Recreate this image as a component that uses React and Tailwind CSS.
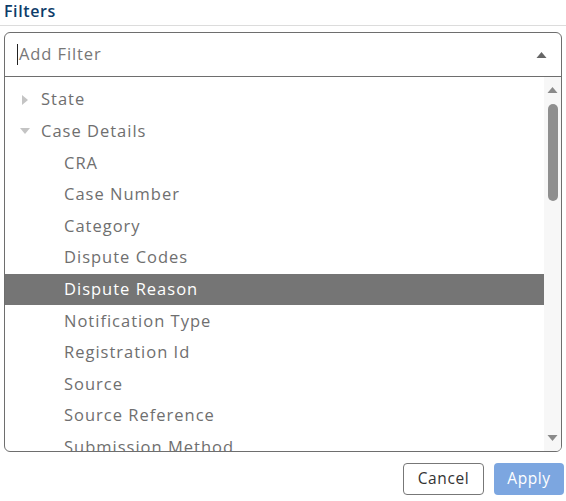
import { useState } from 'react'

const rows = [
  { label: 'State', level: 0, toggle: 'closed' },
  { label: 'Case Details', level: 0, toggle: 'open' },
  { label: 'CRA', level: 1 },
  { label: 'Case Number', level: 1 },
  { label: 'Category', level: 1 },
  { label: 'Dispute Codes', level: 1 },
  { label: 'Dispute Reason', level: 1 },
  { label: 'Notification Type', level: 1 },
  { label: 'Registration Id', level: 1 },
  { label: 'Source', level: 1 },
  { label: 'Source Reference', level: 1 },
  { label: 'Submission Method', level: 1 },
]

function Caret({ dir, className }) {
  // small solid triangles used by the tree and the select
  const d = {
    up: 'M0 8 L5 2 L10 8 Z',
    down: 'M0 2 L10 2 L5 8 Z',
    right: 'M2 0 L8 5 L2 10 Z',
  }[dir]
  return (
    <svg viewBox="0 0 10 10" className={className} fill="currentColor">
      <path d={d} />
    </svg>
  )
}

function TreeRow({ row, active }) {
  return (
    <div
      className={`flex h-[31.6px] shrink-0 items-center ${
        active ? 'bg-[#757575] text-white' : 'text-[#6f6f6f]'
      } ${row.level === 0 ? 'pl-[15px]' : 'pl-[59px]'}`}
    >
      {row.toggle && (
        <span className="mr-[11px] flex w-[10px] justify-center text-[#c4c4c4]">
          <Caret dir={row.toggle === 'open' ? 'down' : 'right'} className="h-[10px] w-[10px]" />
        </span>
      )}
      <span className="whitespace-nowrap">{row.label}</span>
    </div>
  )
}

export default function App() {
  const [selected] = useState('Dispute Reason')

  return (
    <div className="h-[501px] w-[566px] bg-white font-['Open_Sans',sans-serif]">
      <div className="border-b border-[#dcdcdc] pb-[3px] pl-[4px] pt-[1px]">
        <h2 className="text-[16px] font-semibold leading-[21px] tracking-[0.6px] text-[#0d3c6a]">Filters</h2>
      </div>

      <div className="mx-[4px] mt-[6px] flex h-[420px] flex-col overflow-hidden rounded-[6px] border border-[#6e6e6e]">
        {/* search input */}
        <div className="flex h-[44px] shrink-0 items-center border-b border-[#6e6e6e] pl-[12px] pr-[13px]">
          <span className="mr-[1px] h-[21px] w-px bg-[#222]" />
          <span className="flex-1 text-[16.5px] tracking-[0.9px] text-[#777]">Add Filter</span>
          <Caret dir="up" className="h-[10px] w-[13px] text-[#666]" />
        </div>

        {/* tree + scrollbar */}
        <div className="flex min-h-0 flex-1">
          <div className="flex min-w-0 flex-1 flex-col overflow-hidden pt-[7px] text-[16.5px] tracking-[1px]">
            {rows.map((r) => (
              <TreeRow key={r.label} row={r} active={r.label === selected} />
            ))}
          </div>
          <div className="flex w-[17px] shrink-0 flex-col items-center bg-[#f7f7f7] pb-[8px] pt-[8px]">
            <Caret dir="up" className="h-[10px] w-[11px] text-[#8a8a8a]" />
            <div className="mt-[9px] h-[97px] w-[10px] rounded-full bg-[#8f8f8f]" />
            <div className="flex-1" />
            <Caret dir="down" className="h-[10px] w-[11px] text-[#8a8a8a]" />
          </div>
        </div>
      </div>

      <div className="mr-[2px] mt-[11px] flex justify-end gap-[10px]">
        <button className="h-[32px] w-[81px] rounded-[4px] border border-[#777] bg-white text-[15.5px] tracking-[0.6px] text-[#333]">
          Cancel
        </button>
        <button className="h-[32px] w-[70px] rounded-[4px] bg-[#7ca6e0] text-[15.5px] tracking-[0.6px] text-white">
          Apply
        </button>
      </div>
    </div>
  )
}
